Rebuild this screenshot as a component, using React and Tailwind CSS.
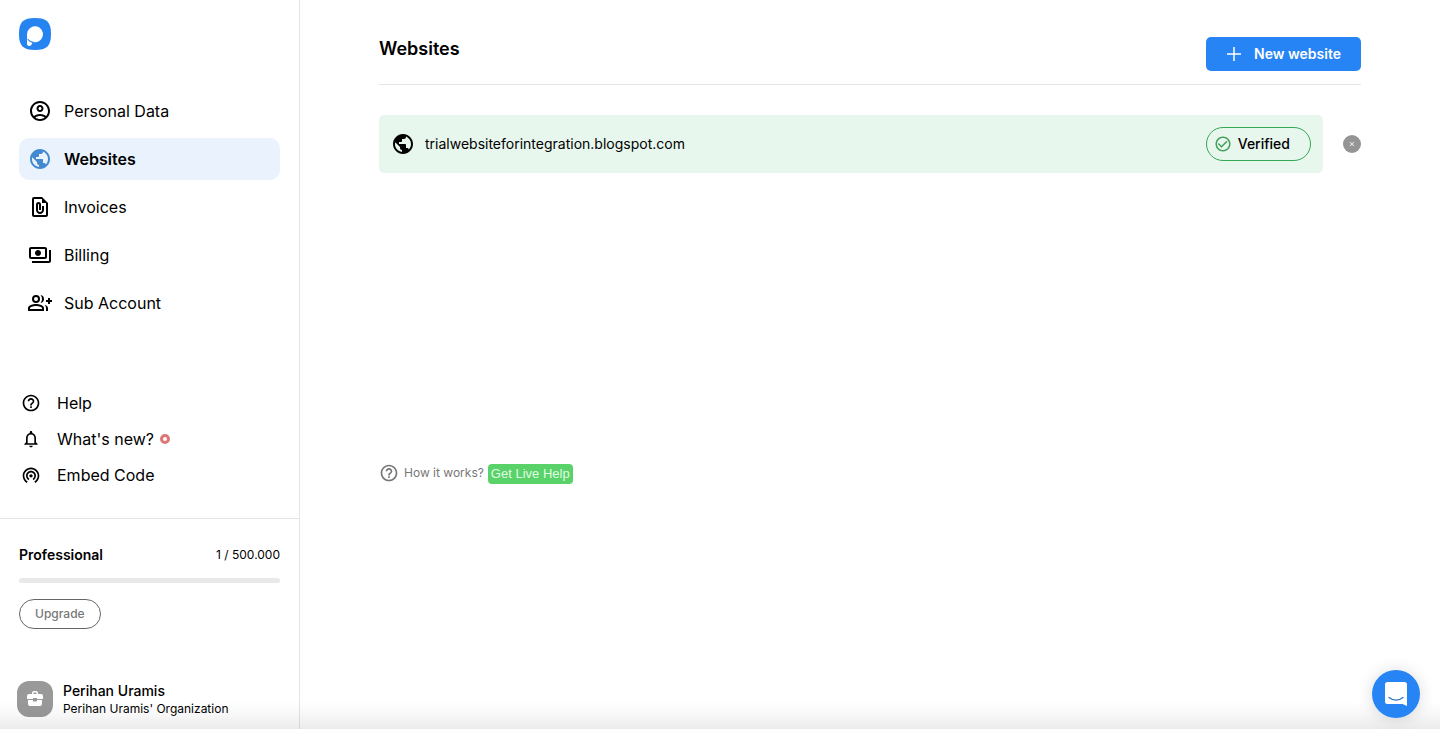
import {
  MdOutlineAccountCircle, MdPublic, MdOutlineFilePresent, MdOutlinePayments,
  MdHelpOutline, MdNotificationsNone, MdWifiTethering,
  MdCheckCircleOutline, MdClose,
} from "react-icons/md";

const mainLinks = [
  { label: "Personal Data", icon: MdOutlineAccountCircle },
  { label: "Websites", icon: MdPublic, active: true },
  { label: "Invoices", icon: MdOutlineFilePresent },
  { label: "Billing", icon: MdOutlinePayments },
  { label: "Sub Account", icon: SubAccountIcon },
];

const supportLinks = [
  { label: "Help", icon: MdHelpOutline },
  { label: "What's new?", icon: MdNotificationsNone, dot: true },
  { label: "Embed Code", icon: MdWifiTethering },
];

function SubAccountIcon({ className }) {
  return (
    <svg viewBox="0 0 24 24" fill="currentColor" className={className} aria-hidden="true">
      <path fillRule="evenodd" d="M8 4a4 4 0 1 0 0 8 4 4 0 0 0 0-8Zm0 2a2 2 0 1 1 0 4 2 2 0 0 1 0-4Z" />
      <path fillRule="evenodd" d="M8 13c-2.670 0-8 1.340-8 4v3h16v-3c0-2.660-5.330-4-8-4Zm6 5H2v-1c0-.7 3-2 6-2s6 1.300 6 2v1Z" />
      <path d="M12.510 4.050A5.960 5.960 0 0 1 14 8c0 1.510-.57 2.890-1.490 3.950A3.990 3.990 0 0 0 16 8a3.990 3.990 0 0 0-3.490-3.950ZM16.530 13.830C17.420 14.660 18 15.700 18 17v3h2v-3c0-1.450-1.590-2.510-3.470-3.170ZM20 7h2v2h2v2h-2v2h-2v-2h-2V9h2V7Z" />
    </svg>
  );
}

function Logo() {
  return (
    <svg viewBox="0 0 32 32" className="size-8" role="img" aria-label="Home">
      <path fill="#2684f0" d="M16 0c12 0 16 4 16 16s-4 16-16 16S0 28 0 16 4 0 16 0Z" />
      <path fill="#fff" d="M8 16a8 8 0 1 1 5.500 7.900c-.3 2.400-1.500 4.100-3.500 4.100-1.300 0-2-1-2-2.500V16Z" />
      <path fill="none" stroke="#2684f0" strokeWidth="1.200" strokeLinecap="round" d="M9 21.500c1.400 1.900 3 2.700 5.400 2.800" />
    </svg>
  );
}

function Sidebar() {
  return (
    <aside className="flex w-75 shrink-0 flex-col border-r border-[#e5e5e5]">
      <a href="#" className="mx-[19px] mt-[18px] w-8"><Logo /></a>
      <nav aria-label="Account" className="mx-[19px] mt-10 flex flex-col gap-1.5">
        {mainLinks.map(({ label, icon: Icon, active }) => (
          <a
            key={label}
            href="#"
            aria-current={active ? "page" : undefined}
            className={active
              ? "flex h-[42px] items-center gap-3 rounded-[10px] bg-[#eaf3fd] px-[9px] font-semibold"
              : "flex h-[42px] items-center gap-3 px-[9px]"}
          >
            <Icon className={active ? "size-6 text-[#4289d0]" : "size-6"} />
            {label}
          </a>
        ))}
      </nav>
      <nav aria-label="Support" className="mx-[21px] mt-[61px] flex flex-col">
        {supportLinks.map(({ label, icon: Icon, dot }) => (
          <a key={label} href="#" className="flex h-9 items-center gap-4">
            <Icon className="size-5" />
            <span className="flex items-center gap-1.5">
              {label}
              {dot && <span className="size-2.5 rounded-full border-3 border-[#df7676] bg-white" />}
            </span>
          </a>
        ))}
      </nav>
      <section className="mt-[25px] border-t border-[#e5e5e5] px-[19px] pt-[26px]">
        <div className="flex h-5 items-center justify-between">
          <h2 className="text-sm font-semibold">Professional</h2>
          <span className="text-xs">1 / 500.000</span>
        </div>
        <div className="mt-[13px] h-[5px] rounded-full bg-[#e9e9e9]" />
        <button type="button" className="mt-4 h-[30px] rounded-full border border-[#666] px-[15px] text-xs font-medium text-[#777]">
          Upgrade
        </button>
      </section>
      <footer className="mt-auto flex items-center gap-2.5 px-[17px] pb-3">
        <span className="flex size-9 items-center justify-center rounded-xl bg-[#999]">
          <svg viewBox="0 0 18 18" className="size-[18px]" fill="#fff" aria-hidden="true">
            <path fillRule="evenodd" d="M6 4V3a2 2 0 0 1 2-2h2a2 2 0 0 1 2 2v1h3a2 2 0 0 1 2 2v3h-6V8H7v1H1V6a2 2 0 0 1 2-2h3Zm1.500 0h3V3a.5.5 0 0 0-.5-.5H8a.5.5 0 0 0-.5.500V4Z" />
            <path d="M2 10h5v1.500h4V10h5v4a2 2 0 0 1-2 2H4a2 2 0 0 1-2-2v-4Z" />
          </svg>
        </span>
        <div>
          <p className="text-sm leading-5 font-medium">Perihan Uramis</p>
          <p className="text-xs leading-4">Perihan Uramis' Organization</p>
        </div>
      </footer>
    </aside>
  );
}

function Main() {
  return (
    <main className="min-w-0 flex-1 px-[79px] pt-[37px]">
      <header className="flex items-start justify-between border-b border-[#e5e5e5] pb-[13px]">
        <h1 className="text-lg leading-6 font-semibold">Websites</h1>
        <button type="button" className="flex h-[34px] items-center gap-3 rounded-[5px] bg-[#2684f5] px-5 text-sm font-semibold text-white">
          <svg viewBox="0 0 16 16" className="size-4" aria-hidden="true">
            <path d="M8 1v14M1 8h14" stroke="currentColor" strokeWidth="1.500" fill="none" />
          </svg>
          New website
        </button>
      </header>
      <ul className="mt-[30px] min-h-[348px]">
        <li className="flex items-center gap-5">
          <div className="flex h-[58px] flex-1 items-center rounded-[5px] bg-[#e8f7ee] px-3">
            <MdPublic className="size-6" />
            <a href="#" className="ml-2.5 text-sm">trialwebsiteforintegration.blogspot.com</a>
            <span className="ml-auto flex h-[34px] items-center gap-1.5 rounded-full border border-[#34a853] pr-5 pl-[7px] text-sm font-medium">
              <MdCheckCircleOutline className="size-[18px] text-[#42a05a]" />
              Verified
            </span>
          </div>
          <button type="button" aria-label="Remove website" className="flex size-[18px] items-center justify-center rounded-full bg-[#949494] text-white">
            <MdClose className="size-2" />
          </button>
        </li>
      </ul>
      <p className="flex h-5 items-center text-xs text-[#777]">
        <MdHelpOutline className="size-5" />
        <span className="ml-[5px]">How it works?</span>
        <a href="#" className="mt-px ml-1 flex h-5 items-center rounded bg-[#59d26a] px-[3px] font-['Liberation_Sans',sans-serif] text-[13px] text-[#e0fce4]">Get Live Help</a>
      </p>
    </main>
  );
}

export default function App() {
  return (
    <div className="flex min-h-screen bg-white font-['Inter',sans-serif] text-base text-black">
      <Sidebar />
      <Main />
      <div className="pointer-events-none fixed inset-x-0 bottom-0 h-7 bg-linear-to-t from-black/8 via-black/3 to-transparent" />
      <button type="button" aria-label="Open chat" className="fixed right-5 bottom-[11px] flex size-12 items-center justify-center rounded-full bg-[#2684f5] shadow-[0_1px_16px_rgba(0,0,0,0.15)]">
        <svg viewBox="0 0 24 26" className="h-[26px] w-6" aria-hidden="true">
          <path fill="#fff" d="M3.500 1h17A2.500 2.500 0 0 1 23 3.500V25l-4.500-2h-15A2.500 2.500 0 0 1 1 20.500v-17A2.500 2.500 0 0 1 3.500 1Z" />
          <path fill="none" stroke="#2872c5" strokeWidth="1.300" strokeLinecap="round" d="M5 16.500c4.300 3.300 9.700 3.300 14 0" />
        </svg>
      </button>
    </div>
  );
}
